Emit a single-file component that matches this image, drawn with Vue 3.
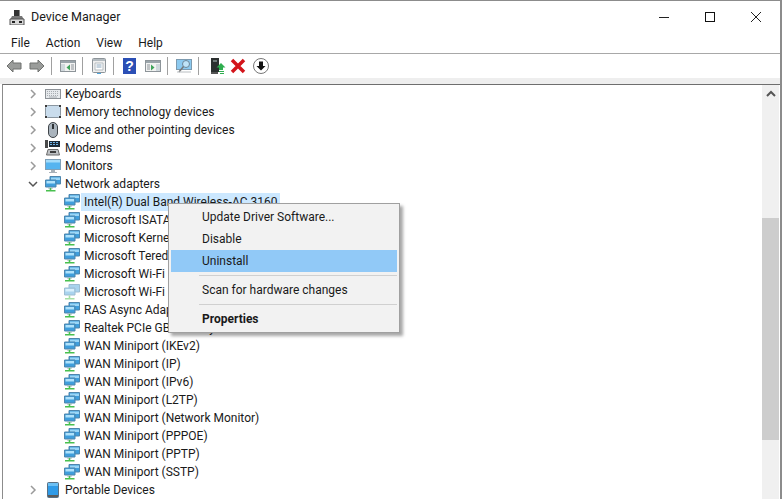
<script setup>
const topRows = [
  { label: 'Keyboards', icon: 'keyboard' },
  { label: 'Memory technology devices', icon: 'memory' },
  { label: 'Mice and other pointing devices', icon: 'mouse' },
  { label: 'Modems', icon: 'modem' },
  { label: 'Monitors', icon: 'monitor' },
]

const adapters = [
  { label: 'Intel(R) Dual Band Wireless-AC 3160', selected: true },
  { label: 'Microsoft ISATAP Adapter' },
  { label: 'Microsoft Kernel Debug Network Adapter' },
  { label: 'Microsoft Teredo Tunneling Adapter' },
  { label: 'Microsoft Wi-Fi Direct Virtual Adapter' },
  { label: 'Microsoft Wi-Fi Direct Virtual Adapter #2', faded: true },
  { label: 'RAS Async Adapter' },
  { label: 'Realtek PCIe GBE Family Controller' },
  { label: 'WAN Miniport (IKEv2)' },
  { label: 'WAN Miniport (IP)' },
  { label: 'WAN Miniport (IPv6)' },
  { label: 'WAN Miniport (L2TP)' },
  { label: 'WAN Miniport (Network Monitor)' },
  { label: 'WAN Miniport (PPPOE)' },
  { label: 'WAN Miniport (PPTP)' },
  { label: 'WAN Miniport (SSTP)' },
]

const menus = ['File', 'Action', 'View', 'Help']
</script>

<template>
  <div class="window">
    <svg class="defs" width="0" height="0">
      <symbol id="chev-right" viewBox="0 0 10 10">
        <path d="M3 1l4 4-4 4" fill="none" stroke="#9a9a9a" stroke-width="1.5" />
      </symbol>
      <symbol id="chev-down" viewBox="0 0 10 10">
        <path d="M1 3l4 4 4-4" fill="none" stroke="#555" stroke-width="1.5" />
      </symbol>
      <symbol id="keyboard" viewBox="0 0 16 16">
        <rect x="0" y="3" width="16" height="10" fill="#8d9297" />
        <rect x="1" y="4" width="14" height="8" fill="#e6e9ec" />
        <path d="M2 5.500h12M2 7.500h12M2 9.500h12" stroke="#a8adb2" stroke-dasharray="1 1" />
        <path d="M4 11h8" stroke="#a8adb2" />
      </symbol>
      <symbol id="memory" viewBox="0 0 16 16">
        <rect x="0.500" y="1.500" width="15" height="12" rx="2" fill="#c9dcec" stroke="#8a96a0" />
        <path d="M0 1h2v2H0zM14 1h2v2h-2zM0 12h2v2H0zM14 12h2v2h-2z" fill="#3a3a3a" />
      </symbol>
      <symbol id="mouse" viewBox="0 0 16 16">
        <rect x="3.500" y="0.500" width="9" height="15" rx="4.500" fill="#aab4bd" stroke="#3f4448" />
        <path d="M8 2v5" stroke="#2f3336" stroke-width="2" />
      </symbol>
      <symbol id="modem" viewBox="0 0 16 16">
        <path d="M0 0h3v8H0z" fill="#4a4a4a" />
        <path d="M4 1h11v6H4z" fill="#1d2a36" />
        <path d="M5 2h2v1H5zM8 2h2v1H8zM11 2h2v1h-2zM5 4h2v1H5zM8 4h2v1H8zM11 4h2v1h-2z" fill="#6fb4e8" />
        <path d="M3 9.500h10l1.500 5.500h-13z" fill="#bfc2c5" stroke="#6a6a6a" />
        <path d="M5 12h6" stroke="#3d3d3d" stroke-width="2" />
      </symbol>
      <symbol id="monitor" viewBox="0 0 16 16">
        <rect x="0.500" y="1.500" width="15" height="10" fill="#55b4f0" stroke="#7fa0b8" />
        <path d="M1 2h14v2.500H1z" fill="#a5dcfa" />
        <path d="M6 12h4v2H6zM4 14h8v1H4z" fill="#a8b2ba" />
      </symbol>
      <symbol id="net" viewBox="0 0 16 16">
        <path d="M5 0.500h10.500v7.500H5z" fill="#3f9edc" stroke="#4f86ad" />
        <path d="M6 1.500h9v2.500H6z" fill="#9ad6f7" />
        <path d="M0.500 4H11v7H0.500z" fill="#3f9edc" stroke="#4f86ad" />
        <path d="M1.500 5h8.500v2.500H1.500z" fill="#b0e2fb" />
        <path d="M3 11.500h5v1H3z" fill="#9fb0ba" />
        <path d="M5.500 12v2M1 14.800h9.500" stroke="#49c04f" stroke-width="1.600" />
      </symbol>
      <symbol id="net-faded" viewBox="0 0 16 16">
        <path d="M5 0.500h10.500v7.500H5z" fill="#a9d3ee" stroke="#9dbdd2" />
        <path d="M0.500 4H11v7H0.500z" fill="#a9d3ee" stroke="#9dbdd2" />
        <path d="M1.500 5h8.500v2.500H1.500z" fill="#d9f0fc" />
        <path d="M5.500 11.500v2.500M1 14.800h9.500" stroke="#a6e0a6" stroke-width="1.600" />
      </symbol>
      <symbol id="portable" viewBox="0 0 16 16">
        <rect x="2.500" y="0.500" width="11" height="15" rx="1" fill="#2f9be8" stroke="#5a7082" />
        <path d="M3 1h10v3H3z" fill="#6cc0f4" />
        <path d="M3 13h10v2H3z" fill="#5a5a5a" />
      </symbol>
    </svg>

    <header class="titlebar">
      <svg class="app-icon" width="16" height="16" viewBox="0 0 16 16">
        <path d="M5 1h6v6H5z" fill="#333" />
        <path d="M10 1h1v6h-1z" fill="#888" />
        <path d="M3 7h10l1.500 3H1.500z" fill="#777" />
        <path d="M1 10h14v6H1z" fill="#d8d8d8" stroke="#555" />
        <path d="M3 12h3v2H3zM10 12h3v2h-3z" fill="#222" />
      </svg>
      <span class="title">Device Manager</span>
      <div class="controls">
        <svg width="12" height="12" viewBox="0 0 12 12"><path d="M1 6.500h10" stroke="#222" /></svg>
        <svg width="12" height="12" viewBox="0 0 12 12"><rect x="1.500" y="1.500" width="9" height="9" fill="none" stroke="#111" /></svg>
        <svg width="12" height="12" viewBox="0 0 12 12"><path d="M1 1l10 10M11 1L1 11" stroke="#222" /></svg>
      </div>
    </header>

    <nav class="menubar">
      <span v-for="m in menus" :key="m" class="menu-label">{{ m }}</span>
    </nav>

    <div class="toolbar">
      <svg class="tool" viewBox="0 0 16 16"><path d="M1 8l6-6v3h8v6H7v3z" fill="#9a9c9a" stroke="#6f716f" /></svg>
      <svg class="tool" viewBox="0 0 16 16"><path d="M15 8l-6-6v3H1v6h8v3z" fill="#9a9c9a" stroke="#6f716f" /></svg>
      <i class="sep"></i>
      <svg class="tool" viewBox="0 0 16 16">
        <rect x="0.500" y="2.500" width="15" height="11" fill="#f2f2f2" stroke="#8d9499" />
        <path d="M1 3h14v2H1z" fill="#9aa4aa" />
        <path d="M1 6h4v7H1z" fill="#cfd8dc" />
        <path d="M10 6.500L6.500 9.500 10 12.500z" fill="#3fa35a" />
        <path d="M11 7h3M11 9h3M11 11h3" stroke="#8d9499" />
      </svg>
      <i class="sep"></i>
      <svg class="tool" viewBox="0 0 16 16">
        <rect x="1.500" y="0.500" width="13" height="14" rx="1" fill="#efefef" stroke="#8d9499" />
        <path d="M2 1h12v2H2z" fill="#b3bbc0" />
        <path d="M4 5h8v7H4z" fill="#fff" stroke="#b5bcc0" />
        <path d="M5.500 7h5M5.500 9h5" stroke="#8aa6bd" />
        <path d="M6 15h4v1H6z" fill="#4ea6de" />
      </svg>
      <i class="sep"></i>
      <svg class="tool" viewBox="0 0 16 16">
        <rect x="1" y="0" width="13" height="16" fill="#2b4fb5" />
        <text x="7.500" y="13" class="help-mark">?</text>
      </svg>
      <svg class="tool" viewBox="0 0 16 16">
        <rect x="0.500" y="2.500" width="15" height="11" fill="#f2f2f2" stroke="#8d9499" />
        <path d="M1 3h14v2H1z" fill="#9aa4aa" />
        <path d="M11 6h4v7h-4z" fill="#cfd8dc" />
        <path d="M6 6.500L9.500 9.500 6 12.500z" fill="#3fa35a" />
        <path d="M2 7h3M2 9h3M2 11h3" stroke="#8d9499" />
      </svg>
      <i class="sep"></i>
      <svg class="tool" viewBox="0 0 16 16">
        <rect x="0.500" y="1.500" width="15" height="10" fill="#8ccaf0" stroke="#7d9bb0" />
        <circle cx="10" cy="6" r="3.500" fill="#bfe4f8" stroke="#6b8699" />
        <path d="M7.500 8.500L3 14" stroke="#777" stroke-width="1.500" />
        <path d="M1 14h14" stroke="#b9bec2" />
      </svg>
      <i class="sep"></i>
      <svg class="tool tool-driver" viewBox="0 0 16 16">
        <path d="M1 0h8v14H1z" fill="#2b3030" />
        <path d="M3 2h4v2H3z" fill="#6f7a7a" />
        <path d="M1 14h7v2H1z" fill="#555" />
        <path d="M11 5l4.500 4.500H13V12H9V9.500H6.500z" fill="#2fae4f" />
        <path d="M9 13.500h5M10 15.500h4" stroke="#2fae4f" />
      </svg>
      <svg class="tool" viewBox="0 0 16 16"><path d="M2 2l12 12M14 2L2 14" stroke="#d3141b" stroke-width="3.500" /></svg>
      <svg class="tool" viewBox="0 0 16 16">
        <circle cx="8" cy="8" r="7.500" fill="#fff" stroke="#777" />
        <path d="M6 3.500h4V8h2.500L8 12.500 3.500 8H6z" fill="#111" />
      </svg>
    </div>

    <div class="band"></div>

    <div class="content">
      <div class="tree">
        <div v-for="r in topRows" :key="r.label" class="row">
          <svg class="chev"><use href="#chev-right" /></svg>
          <svg class="ico"><use :href="'#' + r.icon" /></svg>
          <span class="label">{{ r.label }}</span>
        </div>

        <div class="row">
          <svg class="chev"><use href="#chev-down" /></svg>
          <svg class="ico"><use href="#net" /></svg>
          <span class="label">Network adapters</span>
        </div>

        <div v-for="a in adapters" :key="a.label" class="row child">
          <svg class="ico"><use :href="a.faded ? '#net-faded' : '#net'" /></svg>
          <span class="label" :class="{ selected: a.selected }">{{ a.label }}</span>
        </div>

        <div class="row">
          <svg class="chev"><use href="#chev-right" /></svg>
          <svg class="ico"><use href="#portable" /></svg>
          <span class="label">Portable Devices</span>
        </div>
      </div>

      <div class="scrollbar">
        <div class="arrow">
          <svg width="10" height="8" viewBox="0 0 10 8"><path d="M1 6l4-4 4 4" fill="none" stroke="#555" stroke-width="2" /></svg>
        </div>
        <div class="thumb"></div>
      </div>

      <ul class="context">
        <li>Update Driver Software...</li>
        <li>Disable</li>
        <li class="active">Uninstall</li>
        <li class="divider"></li>
        <li>Scan for hardware changes</li>
        <li class="divider"></li>
        <li class="bold">Properties</li>
      </ul>
    </div>
  </div>
</template>

<style>
html, body { margin: 0; background: #fff; }
</style>

<style scoped>
.window {
  width: 782px;
  height: 499px;
  box-sizing: border-box;
  display: flex;
  flex-direction: column;
  overflow: hidden;
  background: #fff;
  border-top: 1px solid #8c8c8c;
  border-right: 2px solid #8c8c8c;
  font-family: Roboto, "Open Sans", sans-serif;
  font-size: 12px;
  color: #1a1a1a;
}
.defs { position: absolute; }
.titlebar {
  height: 31px;
  display: flex;
  align-items: center;
  padding-left: 9px;
  flex: none;
}
.title { margin-left: 6px; font-size: 12.5px; }
.controls {
  margin-left: auto;
  display: flex;
  gap: 34px;
  padding-right: 18px;
}
.menubar {
  height: 21px;
  display: flex;
  align-items: center;
  gap: 16px;
  padding-left: 11px;
  flex: none;
  border-bottom: 1px solid #a8a8a8;
}
.toolbar {
  height: 24px;
  display: flex;
  align-items: center;
  padding-left: 6px;
  flex: none;
}
.tool { width: 16px; height: 16px; margin-right: 7px; flex: none; }
.tool-driver { margin-left: 3px; margin-right: 4px; }
.help-mark { fill: #fff; font-size: 14px; font-weight: 700; text-anchor: middle; font-family: "Liberation Sans", sans-serif; }
.sep { width: 1px; height: 18px; background: #a0a0a0; margin: 0 8px 0 -1px; flex: none; }
.band { height: 6px; background: #eeeeee; flex: none; }
.content {
  position: relative;
  flex: 1;
  min-height: 0;
  display: flex;
  border-top: 1px solid #6e6e6e;
  border-left: 1px solid #8c8c8c;
  margin-left: 2px;
}
.tree { flex: 1; min-width: 0; overflow: hidden; }
.row {
  height: 18px;
  display: flex;
  align-items: center;
  padding-left: 25px;
  white-space: nowrap;
}
.child { padding-left: 61px; }
.chev { width: 10px; height: 10px; flex: none; margin-right: 7px; }
.ico { width: 16px; height: 16px; flex: none; margin-right: 4px; }
.label { line-height: 18px; }
.selected { background: #cce8ff; padding: 0 3px; margin-left: -3px; }
.scrollbar {
  width: 17px;
  background: #f0f0f0;
  margin-right: 1px;
  flex: none;
}
.arrow { height: 17px; display: flex; align-items: center; justify-content: center; }
.thumb { height: 222px; margin-top: 116px; background: #cdcdcd; }
.context {
  position: absolute;
  left: 165px;
  top: 118px;
  width: 232px;
  box-sizing: border-box;
  margin: 0;
  padding: 2px;
  list-style: none;
  background: #f2f2f2;
  border: 1px solid #a0a0a0;
  box-shadow: 3px 3px 3px rgba(0, 0, 0, 0.35);
}
.context li {
  height: 22px;
  line-height: 22px;
  padding-left: 31px;
  white-space: nowrap;
}
.context .active { background: #91c9f7; }
.context .bold { font-weight: 700; }
.context .divider {
  height: 1px;
  margin: 3px 0 3px 28px;
  background: #d0d0d0;
}
</style>
